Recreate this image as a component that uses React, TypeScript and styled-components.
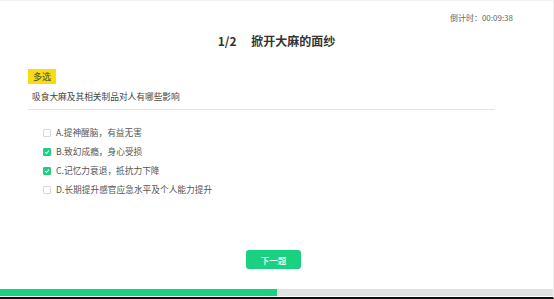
import React from 'react';
import styled, { createGlobalStyle } from 'styled-components';

const GlobalStyle = createGlobalStyle`
  html, body {
    margin: 0;
    padding: 0;
    background: #fff;
  }
  body {
    font-family: "Noto Sans CJK SC", "Noto Sans", sans-serif;
  }
`;

const green = '#1ad181';

const Page = styled.div`
  width: 554px;
  height: 299px;
  box-sizing: border-box;
  border-top: 1px solid #f0f0f0;
  border-right: 1px solid #eeeeee;
  border-bottom: 2px solid #111;
  display: flex;
  flex-direction: column;
  overflow: hidden;
`;

const Timer = styled.div`
  align-self: flex-end;
  margin: 11px 40px 0 0;
  font-size: 8px;
  line-height: 11px;
  color: #666;
`;

const Title = styled.h1`
  margin: 10px 0 0;
  text-align: center;
  font-size: 12px;
  font-weight: 700;
  color: #333;
  line-height: 16px;
  word-spacing: 12px;
`;

const Body = styled.div`
  padding: 0 58px 0 28px;
  display: flex;
  flex-direction: column;
  align-items: flex-start;
`;

const Tag = styled.span`
  margin-top: 20px;
  padding: 0 5px;
  background: #f7dd10;
  color: #444;
  font-size: 9px;
  line-height: 15px;
`;

const Question = styled.div`
  align-self: stretch;
  padding: 7px 0 6px 4px;
  border-bottom: 1px solid #e4e4e4;
  font-size: 8.7px;
  line-height: 12px;
  color: #444;
`;

const Options = styled.ul`
  list-style: none;
  margin: 17px 0 0;
  padding: 0 0 0 15px;
  display: flex;
  flex-direction: column;
  gap: 7px;
`;

const Option = styled.li`
  display: flex;
  align-items: center;
  gap: 5px;
  font-size: 8.7px;
  line-height: 12px;
  color: #555;
`;

const Box = styled.span<{ $on: boolean }>`
  width: 8px;
  height: 8px;
  box-sizing: border-box;
  border-radius: 1px;
  border: 1px solid ${p => (p.$on ? green : '#d8d8d8')};
  background: ${p => (p.$on ? green : '#fff')};
  display: flex;
  align-items: center;
  justify-content: center;
`;

const Footer = styled.div`
  margin-top: auto;
  display: flex;
  flex-direction: column;
  align-items: center;
`;

const NextButton = styled.button`
  width: 55px;
  height: 19px;
  margin-right: 6px;
  border: none;
  border-radius: 3px;
  background: ${green};
  color: #fff;
  font-family: inherit;
  font-size: 8.5px;
  font-weight: 500;
  padding: 0;
  cursor: pointer;
`;

const Progress = styled.div`
  align-self: stretch;
  margin-top: 20px;
  margin-bottom: 1px;
  height: 7px;
  background: #e2e2e2;
`;

const Fill = styled.div`
  height: 100%;
  background: ${green};
`;

const options = [
  { label: 'A.提神醒脑，有益无害', on: false },
  { label: 'B.致幻成瘾，身心受损', on: true },
  { label: 'C.记忆力衰退，抵抗力下降', on: true },
  { label: 'D.长期提升感官应急水平及个人能力提升', on: false },
];

const App = () => {
  const current = 1;
  const total = 2;
  return (
    <>
      <GlobalStyle />
      <Page>
        <Timer>倒计时：00:09:38</Timer>
        <Title>{current}/{total} 掀开大麻的面纱</Title>
        <Body>
          <Tag>多选</Tag>
          <Question>吸食大麻及其相关制品对人有哪些影响</Question>
          <Options>
            {options.map(o => (
              <Option key={o.label}>
                <Box $on={o.on}>
                  {o.on && (
                    <svg width="6" height="6" viewBox="0 0 6 6">
                      <path d="M1 3.1 L2.5 4.5 L5 1.6" fill="none" stroke="#fff" strokeWidth="1.1" />
                    </svg>
                  )}
                </Box>
                {o.label}
              </Option>
            ))}
          </Options>
        </Body>
        <Footer>
          <NextButton>下一题</NextButton>
          <Progress>
            <Fill style={{ width: `${(current / total) * 100}%` }} />
          </Progress>
        </Footer>
      </Page>
    </>
  );
};

export default App;
